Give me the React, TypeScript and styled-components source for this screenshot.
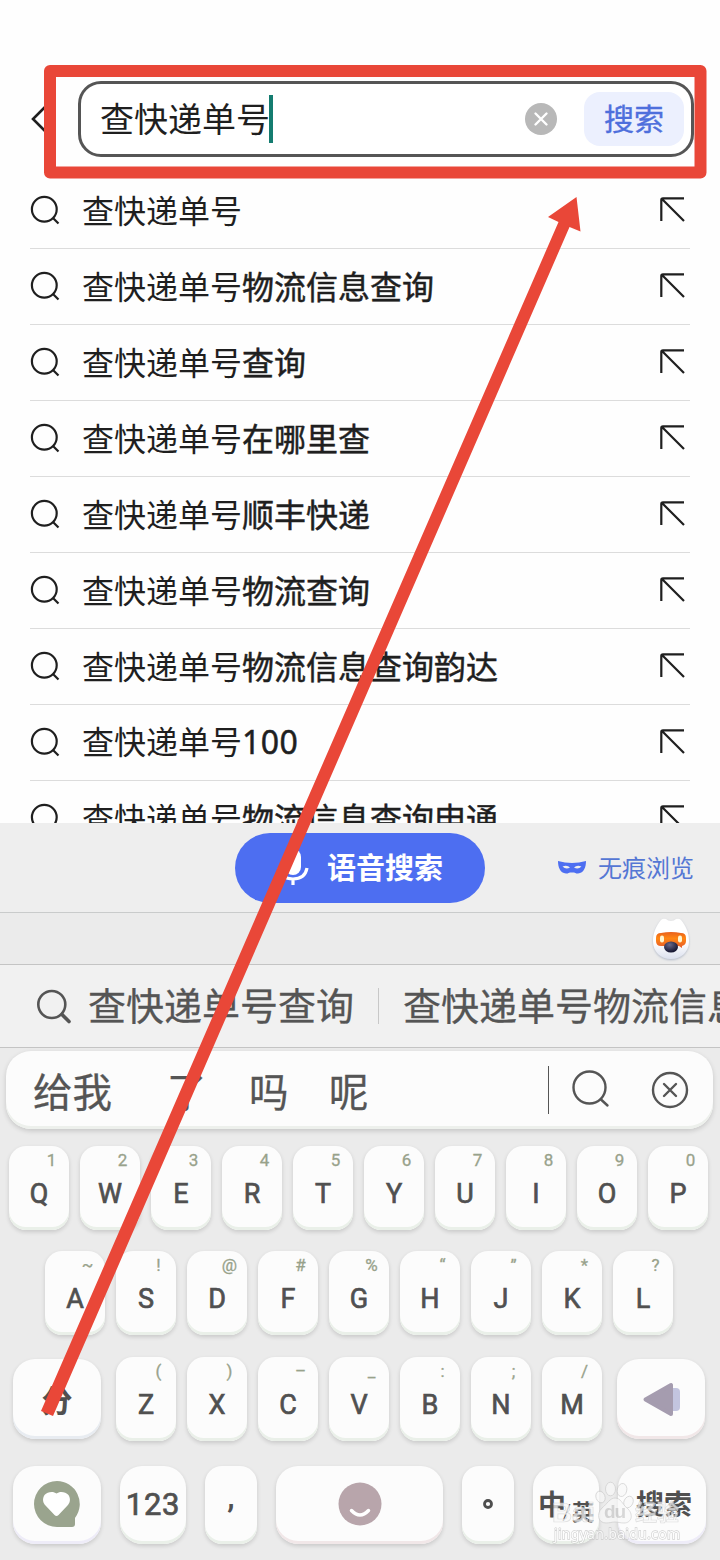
import React from "react";
import styled, { createGlobalStyle } from "styled-components";

const GlobalStyle = createGlobalStyle`
  * { box-sizing: border-box; }
  body { margin: 0; background: #ebebeb; }
`;

const cjk = `"Noto Sans CJK SC", "Noto Sans", sans-serif`;
const latin = `Roboto, "Noto Sans CJK SC", sans-serif`;

const Screen = styled.main`
  position: relative;
  display: flex;
  flex-direction: column;
  width: 720px;
  height: 1560px;
  overflow: hidden;
  background: #ebebeb;
  color: #1f1f1f;
  font-family: ${cjk};
  white-space: nowrap;
`;

const Header = styled.header`
  display: flex;
  align-items: center;
  height: 173px;
  flex: none;
  padding: 65px 26px 0 30px;
  background: #fefefe;
`;

const BackIcon = styled.svg`
  width: 18px;
  height: 32px;
  margin-right: 30px;
  flex: none;
`;

const SearchBox = styled.div`
  display: flex;
  align-items: center;
  flex: 1;
  height: 76px;
  padding: 0 7px 0 19px;
  border: 3px solid #555;
  border-radius: 23px;
  background: #fff;
`;

const Query = styled.span`
  padding-bottom: 3px;
  font-size: 34px;
  line-height: 48px;
`;

const Caret = styled.span`
  width: 4px;
  height: 48px;
  margin-left: -1px;
  background: #147c70;
`;

const ClearIcon = styled.svg`
  width: 32px;
  height: 32px;
  margin-left: auto;
  margin-right: 27px;
`;

const SearchButton = styled.button`
  width: 100px;
  height: 54px;
  padding: 0 0 3px;
  border: 0;
  border-radius: 16px;
  background: #ecf0fe;
  color: #4e6fdc;
  font: 400 30px/51px ${cjk};
  -webkit-text-stroke: 0.4px #4e6fdc;
`;

const Results = styled.ul`
  height: 650px;
  flex: none;
  margin: 0;
  padding: 0 30px;
  overflow: hidden;
  list-style: none;
  background: #fefefe;
`;

const ResultRow = styled.li`
  display: flex;
  align-items: center;
  height: 76px;
  border-bottom: 1px solid #dcdcdc;
`;

const RowIcon = styled.svg`
  width: 32px;
  height: 32px;
  flex: none;
  fill: none;
  stroke: #1f1f1f;
  stroke-width: 2.2;
`;

const ResultText = styled.span`
  flex: 1;
  margin-left: 20px;
  padding-bottom: 4px;
  font-size: 32px;
  line-height: 48px;
`;

const Completion = styled.span<{ $numeric: boolean }>`
  font-family: ${({ $numeric }) => ($numeric ? `"Noto Sans", sans-serif` : cjk)};
  letter-spacing: ${({ $numeric }) => ($numeric ? "0.5px" : "0")};
  -webkit-text-stroke: 0.5px #1f1f1f;
`;

const VoiceBar = styled.div`
  display: flex;
  align-items: center;
  height: 90px;
  flex: none;
  padding: 0 26px 0 235px;
  border-bottom: 1px solid #c9cbcb;
  background: #eee;
`;

const VoiceButton = styled.button`
  display: flex;
  align-items: center;
  width: 250px;
  height: 70px;
  padding: 0 0 0 42px;
  border: 0;
  border-radius: 35px;
  background: #4d6ef1;
  color: #fff;
  font: 700 29px/70px ${cjk};
`;

const VoiceLabel = styled.span`
  height: 70px;
  margin-top: -3px;
`;

const MicIcon = styled.svg`
  width: 32px;
  height: 40px;
  margin-right: 18px;
  margin-bottom: 2px;
`;

const PrivateLink = styled.a`
  display: flex;
  align-items: center;
  margin-left: auto;
  padding-bottom: 1px;
  color: #5577d4;
  font-size: 24px;
  line-height: 36px;
`;

const MaskIcon = styled.svg`
  width: 28px;
  height: 16px;
  margin-right: 12px;
`;

const MascotStrip = styled.div`
  display: flex;
  justify-content: flex-end;
  height: 52px;
  flex: none;
  padding: 3px 27px 0;
  border-bottom: 1px solid #c4c4c4;
`;

const Mascot = styled.svg`
  width: 44px;
  height: 48px;
  flex: none;
`;

const SuggestBar = styled.div`
  display: flex;
  align-items: center;
  height: 83px;
  flex: none;
  padding-left: 34px;
  overflow: hidden;
  border-bottom: 1px solid #c4c4c4;
  background: #f1f1f1;
  color: #555;
  font-size: 38px;
  line-height: 56px;
`;

const SuggestText = styled.span`
  padding-bottom: 4px;
  -webkit-text-stroke: 0.3px #555;
`;

const SuggestIcon = styled.svg`
  width: 40px;
  height: 40px;
  margin-right: 14px;
  flex: none;
`;

const SuggestDivider = styled.i`
  width: 1px;
  height: 36px;
  margin: 0 24px;
  flex: none;
  background: #c8c8c8;
`;

const CandidateBar = styled.div`
  display: flex;
  align-items: center;
  width: 707px;
  height: 78px;
  flex: none;
  margin: 3px 0 0 6px;
  padding: 0 21px 0 27px;
  border-radius: 25px;
  background: #fcfcfc;
  box-shadow: inset 0 -3px #edf0ec, 0 2px 5px rgba(0, 0, 0, 0.16);
  color: #555;
  font-size: 39.5px;
  line-height: 56px;
`;

const Candidate = styled.span<{ $width: number }>`
  width: ${({ $width }) => $width}px;
  -webkit-text-stroke: 0.3px #555;
`;

const CandidateDivider = styled.i`
  width: 1px;
  height: 48px;
  margin-left: auto;
  margin-right: 20px;
  background: #555;
`;

const CandidateIcon = styled.svg`
  width: 44px;
  height: 44px;
  fill: none;
  stroke: #555;
  stroke-width: 2.4;
  stroke-linecap: round;

  & + & {
    margin-left: 35px;
  }
`;

const Keyboard = styled.section`
  display: flex;
  flex-direction: column;
  color: #505050;
  font-family: ${latin};
`;

const KeyRow = styled.div<{ $top: number; $left: number; $gap: number }>`
  display: flex;
  align-items: center;
  gap: ${({ $gap }) => $gap}px;
  margin-top: ${({ $top }) => $top}px;
  padding-left: ${({ $left }) => $left}px;
`;

const LetterGroup = styled.div`
  display: flex;
  gap: 11px;
`;

const lips = { green: "#eaf0e9", blue: "#e8ecf1", lilac: "#eeecf8", pink: "#f1e7e8" };

const KeyCap = styled.div<{ $width?: number; $height?: number; $lip?: keyof typeof lips }>`
  display: flex;
  flex-direction: column;
  align-items: center;
  width: ${({ $width = 60 }) => $width}px;
  height: ${({ $height = 84 }) => $height}px;
  flex: none;
  border-radius: ${({ $width = 60 }) => ($width > 60 ? 22 : 17)}px;
  background: #fcfcfc;
  box-shadow: inset 0 -3px ${({ $lip = "green" }) => lips[$lip]}, 0 2px 4px rgba(0, 0, 0, 0.15);
`;

const Hint = styled.span`
  width: 24px;
  height: 20px;
  margin: 4px 0 9px 25px;
  color: #98a28b;
  font-size: 17px;
  font-weight: 400;
  line-height: 20px;
  text-align: center;
  -webkit-text-stroke: 0.3px #98a28b;
`;

const Letter = styled.span`
  font-size: 27px;
  font-weight: 400;
  line-height: 30px;
  -webkit-text-stroke: 0.7px #505050;
`;

const FunctionKey = styled(KeyCap)<{ $size?: number }>`
  justify-content: center;
  padding-bottom: 3px;
  font-size: ${({ $size = 28 }) => $size}px;
  font-weight: 700;
  line-height: 40px;
`;

const ShiftLabel = styled.span`
  padding-top: 9px;
`;

const SearchLabel = styled.span`
  padding: 5px 0 0 4px;
`;

const NumberLabel = styled.span`
  padding-top: 3px;
  font-size: 31px;
  font-weight: 400;
  letter-spacing: 0.7px;
  -webkit-text-stroke: 0.7px #505050;
`;

const Comma = styled.span`
  margin-top: -12px;
  font-size: 30px;
`;

const LanguageLabel = styled.span`
  display: flex;
  align-items: flex-end;
  height: 44px;
  font-size: 28px;
`;

const LanguageSlash = styled.span`
  margin: 0 1px 0 -4px;
  font-size: 22px;
  font-weight: 300;
  line-height: 26px;
`;

const LanguageAlt = styled.small`
  font-size: 22px;
  line-height: 26px;
`;

const Annotation = styled.svg`
  position: absolute;
  inset: 0;
  width: 720px;
  height: 1560px;
  pointer-events: none;
`;

const results = ["", "物流信息查询", "查询", "在哪里查", "顺丰快递", "物流查询", "物流信息查询韵达", "100", "物流信息查询申通"];

const topKeys = ["Q1", "W2", "E3", "R4", "T5", "Y6", "U7", "I8", "O9", "P0"];
const homeKeys = ["A~", "S!", "D@", "F#", "G%", "H“", "J”", "K*", "L?"];
const bottomKeys = ["Z(", "X)", "C–", "V_", "B:", "N;", "M/"];

const Keys = ({ items }: { items: string[] }) => (
  <LetterGroup>
    {items.map(([letter, hint]) => (
      <KeyCap key={letter}>
        <Hint>{hint}</Hint>
        <Letter>{letter}</Letter>
      </KeyCap>
    ))}
  </LetterGroup>
);

const Watermark = () => (
  <g opacity="0.72">
    <g fill="#f8f8f8" stroke="#c6c6c6" strokeWidth="0.8">
      <ellipse cx="600.500" cy="1497" rx="4.500" ry="6" transform="rotate(-20 600.500 1497)" />
      <ellipse cx="610.500" cy="1489" rx="5" ry="6.800" />
      <ellipse cx="622" cy="1490" rx="4.800" ry="6.600" transform="rotate(12 622 1490)" />
      <ellipse cx="628.500" cy="1502" rx="4.500" ry="6" transform="rotate(25 628.500 1502)" />
      <path d="M615 1498c6 0 7 6 12 10 7 6 5 15-3 15-4 0-6-1-9-1s-5 1-9 1c-8 0-10-9-4-15 5-4 8-10 13-10Z" />
    </g>
    <g fill="#f8f8f8" stroke="#d2d2d2" strokeWidth="0.7">
      <text x="552" y="1522" fontSize="28" fontWeight="700" textLength="43" fontFamily="Liberation Sans, sans-serif">Bai</text>
      <text x="604" y="1518" fontSize="19" fontWeight="700" fill="#c9c9c9" stroke="none" textLength="22" fontFamily="Liberation Sans, sans-serif">du</text>
      <text x="635" y="1520" fontSize="22" fontWeight="700" textLength="44" fontFamily="Noto Sans CJK SC, sans-serif">经验</text>
    </g>
    <text x="554" y="1539" fontSize="14" textLength="126" fontFamily="Noto Sans, sans-serif" fill="#fff" stroke="#c2c2c2" strokeWidth="1.300" paintOrder="stroke">jingyan.baidu.com</text>
  </g>
);

export default function App() {
  return (
    <Screen>
      <GlobalStyle />
      <Header>
        <BackIcon viewBox="0 0 18 32">
          <path d="M17 2 3 16l14 14" fill="none" stroke="#1f1f1f" strokeWidth="2.6" />
        </BackIcon>
        <SearchBox>
          <Query>查快递单号</Query>
          <Caret />
          <ClearIcon viewBox="0 0 32 32">
            <circle cx="16" cy="16" r="16" fill="#b8b8b8" />
            <path d="m10.5 10.5 11 11m0-11-11 11" stroke="#fff" strokeWidth="2.4" strokeLinecap="round" />
          </ClearIcon>
          <SearchButton>搜索</SearchButton>
        </SearchBox>
      </Header>

      <Results>
        {results.map((text) => (
          <ResultRow key={text}>
            <RowIcon viewBox="0 0 32 32">
              <circle cx="14.3" cy="14.300" r="12.4" />
              <path d="m23 23 5.500 5.500" />
            </RowIcon>
            <ResultText>
              查快递单号<Completion $numeric={text === "100"}>{text}</Completion>
            </ResultText>
            <RowIcon viewBox="0 0 32 32">
              <path d="M26 3.300H5Q3.300 3.300 3.300 5V26M4 4l22 22" />
            </RowIcon>
          </ResultRow>
        ))}
      </Results>

      <VoiceBar>
        <VoiceButton>
          <MicIcon viewBox="0 0 32 40">
            <rect x="8" y="2" width="16" height="26" rx="8" fill="#fff" />
            <path d="M2 21q2 11 14 11t14-11M16 32v6" fill="none" stroke="#fff" strokeWidth="3.2" />
          </MicIcon>
          <VoiceLabel>语音搜索</VoiceLabel>
        </VoiceButton>
        <PrivateLink>
          <MaskIcon viewBox="0 0 28 16">
            <path fill="#4d6ef1" fillRule="evenodd" d="M0 2q7 2 14 2t14-2c0 6-2 12-8 12.500-2 .3-3-1-4-1h-4c-1 0-2 1.300-4 1C2 14 0 8 0 2Zm4.500 5.500q3.500 3.500 7.500 1-3-3-7.500-1Zm19 0q-4.500-2-7.500 1 4 2.500 7.500-1Z" />
          </MaskIcon>
          无痕浏览
        </PrivateLink>
      </VoiceBar>

      <MascotStrip>
        <Mascot viewBox="0 0 44 48">
          <defs>
            <linearGradient id="face" x1="0" y1="0" x2="0" y2="1">
              <stop offset="0.6" stopColor="#fff" />
              <stop offset="1" stopColor="#dbe0ee" />
            </linearGradient>
            <linearGradient id="visor" x1="0" y1="0" x2="0" y2="1">
              <stop offset="0" stopColor="#e8601c" />
              <stop offset="0.4" stopColor="#ff8612" />
              <stop offset="1" stopColor="#e65b2c" />
            </linearGradient>
            <radialGradient id="nose" cx="0.4" cy="0.3" r="0.7">
              <stop offset="0" stopColor="#69698a" />
              <stop offset="1" stopColor="#11122d" />
            </radialGradient>
            <filter id="soft" x="-20%" y="-20%" width="140%" height="140%">
              <feDropShadow dx="0" dy="1" stdDeviation="1.2" floodColor="#8290aa" floodOpacity="0.55" />
            </filter>
          </defs>
          <path d="M22 5q3 0 5-2 3-1 5 1c5 6 8 13 8 21 0 11-8 18-18 18S4 36 4 25C4 17 7 10 12 4q2-2 5-1 2 2 5 2Z" fill="url(#face)" filter="url(#soft)" />
          <path d="M12 17q10-2 20 0 5 0 5 5v3q0 4-4 5v2l-3-2H12q-5 0-5-5v-3q0-5 5-5Z" fill="url(#visor)" />
          <rect x="11" y="19.500" width="4" height="7" rx="2" fill="#fff5d0" />
          <rect x="29" y="19.500" width="4" height="7" rx="2" fill="#fff5d0" />
          <ellipse cx="22" cy="31" rx="7" ry="5.500" fill="url(#nose)" />
        </Mascot>
      </MascotStrip>

      <SuggestBar>
        <SuggestIcon viewBox="0 0 40 40">
          <g fill="none" stroke="#555" strokeWidth="2.600" strokeLinecap="round">
            <circle cx="17.800" cy="18.500" r="13.500" />
            <path d="m28 28.500 7 7" strokeWidth="3.600" />
          </g>
        </SuggestIcon>
        <SuggestText>查快递单号查询</SuggestText>
        <SuggestDivider />
        <SuggestText>查快递单号物流信息</SuggestText>
      </SuggestBar>

      <CandidateBar>
        <Candidate $width={134}>给我</Candidate>
        <Candidate $width={82}>了</Candidate>
        <Candidate $width={80}>吗</Candidate>
        <Candidate $width={40}>呢</Candidate>
        <CandidateDivider />
        <CandidateIcon viewBox="0 0 44 44">
          <circle cx="20.500" cy="19.500" r="16" />
          <path d="m32 31.500 6.500 6" />
        </CandidateIcon>
        <CandidateIcon viewBox="0 0 44 44">
          <circle cx="22" cy="22" r="17" />
          <path d="m16 16 12 12m0-12L16 28" />
        </CandidateIcon>
      </CandidateBar>

      <Keyboard>
        <KeyRow $top={17} $left={9} $gap={0}>
          <Keys items={topKeys} />
        </KeyRow>
        <KeyRow $top={21} $left={45} $gap={0}>
          <Keys items={homeKeys} />
        </KeyRow>
        <KeyRow $top={22} $left={13} $gap={15}>
          <FunctionKey $width={88} $height={80} $lip="blue" $size={31}>
            <ShiftLabel>分</ShiftLabel>
          </FunctionKey>
          <Keys items={bottomKeys} />
          <FunctionKey $width={88} $height={80} $lip="pink">
            <svg width="40" height="38" viewBox="0 0 40 38">
              <rect x="25" y="9" width="14" height="23" rx="4" fill="#c3c5df" />
              <path d="M4.500 20.500 30 6v29Z" fill="#a59caf" stroke="#a59caf" strokeWidth="4" strokeLinejoin="round" />
            </svg>
          </FunctionKey>
        </KeyRow>
        <KeyRow $top={25} $left={13} $gap={19}>
          <FunctionKey $width={88} $height={78} $lip="lilac">
            <svg width="46" height="46" viewBox="0 0 46 46">
              <path d="M23 0a23 23 0 0 1 18 37v6q0 3-3 3H23a23 23 0 0 1 0-46Z" fill="#9aa48e" />
              <path d="M22.500 12.500c3-2.500 9-2 12 1.500 2.500 4 1.500 8-1 10.500l-9 9.500q-2 2-4 0l-9-9.500c-2.500-2.500-3.500-6.500-1-10.500 3-3.500 9-4 12-1.500Z" fill="#fff" />
            </svg>
          </FunctionKey>
          <FunctionKey $width={66} $height={78}><NumberLabel>123</NumberLabel></FunctionKey>
          <FunctionKey $width={52} $height={78}><Comma>,</Comma></FunctionKey>
          <FunctionKey $width={167} $height={78} $lip="pink">
            <svg width="44" height="44" viewBox="0 0 44 44">
              <circle cx="22" cy="22" r="21.500" fill="#b8a5ab" />
              <path d="M13.500 28.500q8.500 9 17 0" fill="none" stroke="#fff" strokeWidth="3.500" strokeLinecap="round" />
            </svg>
          </FunctionKey>
          <FunctionKey $width={52} $height={78}>
            <svg width="12" height="12" viewBox="0 0 12 12">
              <circle cx="6" cy="6" r="3.500" fill="none" stroke="#4e4e4e" strokeWidth="2.800" />
            </svg>
          </FunctionKey>
          <FunctionKey $width={66} $height={78}>
            <LanguageLabel>
              中<LanguageSlash>/</LanguageSlash>
              <LanguageAlt>英</LanguageAlt>
            </LanguageLabel>
          </FunctionKey>
          <FunctionKey $width={88} $height={78} $lip="lilac">
            <SearchLabel>搜索</SearchLabel>
          </FunctionKey>
        </KeyRow>
      </Keyboard>

      <Annotation viewBox="0 0 720 1560">
        <Watermark />
        <rect x="50" y="71" width="650.500" height="101.500" fill="none" stroke="#e94738" strokeWidth="12" strokeLinejoin="round" />
        <path d="M576.500 197 580.500 231.500 569.500 227 53 1416 41 1411 558.500 222 548 217Z" fill="#e94738" />
      </Annotation>
    </Screen>
  );
}
